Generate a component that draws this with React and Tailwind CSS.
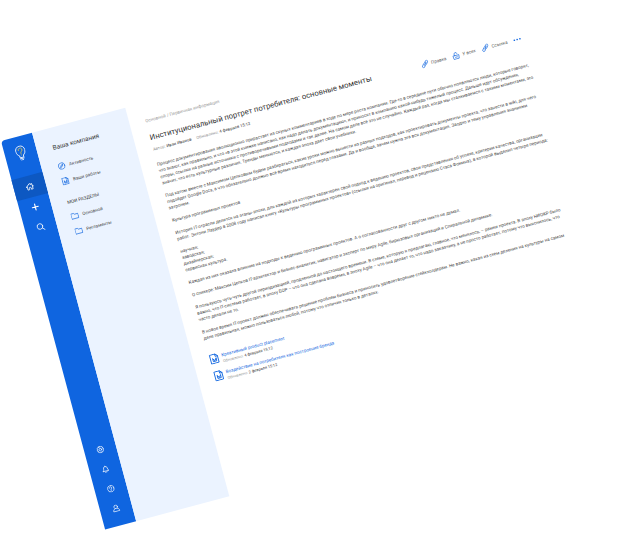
import React from 'react';

function Icon({ children, className = 'size-6' }) {
  return (
    <svg
      viewBox="0 0 24 24"
      className={`shrink-0 ${className}`}
      fill="none"
      stroke="currentColor"
      strokeWidth="2"
      strokeLinecap="round"
      strokeLinejoin="round"
      aria-hidden="true"
    >
      {children}
    </svg>
  );
}

const HomeIcon = () => (
  <Icon className="size-7">
    <path d="M2.5 12.5 12 4l4 3.500V5.500h2.500V10l3 2.500" />
    <path d="M5 11.500V20h4.500v-3.500a2.500 2.500 0 0 1 5 0V20H19v-8.500" />
  </Icon>
);

const PlusIcon = () => (
  <Icon className="size-7">
    <path d="M12 4v16M4 12h16" strokeWidth="3" />
  </Icon>
);

const SearchIcon = () => (
  <Icon className="size-7">
    <circle cx="10.500" cy="10.500" r="7.500" />
    <path d="m16 16 5.500 5.500" />
  </Icon>
);

const GearIcon = () => (
  <Icon>
    <path d="M9.800 2h4.400l.7 2.700 2.400-1.400 3.200 3.200-1.400 2.400 2.900.9v4.400l-2.900.9 1.400 2.400-3.200 3.200-2.400-1.400-.7 2.700H9.800l-.7-2.700-2.400 1.400-3.200-3.200 1.400-2.400-2.900-.9V9.800l2.900-.9-1.400-2.400 3.200-3.200 2.400 1.400z" />
    <circle cx="12" cy="12" r="4" />
  </Icon>
);

const BellIcon = () => (
  <Icon>
    <path d="M3 18h18c-2.500-2-3-4-3-8a6 6 0 0 0-12 0c0 4-.5 6-3 8z" />
    <path d="M9.500 21.500h5M12 4V2" />
  </Icon>
);

const HelpIcon = () => (
  <Icon>
    <circle cx="12" cy="12" r="10" />
    <path d="M8.500 9.500a3.500 3.500 0 1 1 5 3.200c-1 .6-1.500 1-1.500 2.300M12 18v.3" />
  </Icon>
);

const UserIcon = () => (
  <Icon>
    <circle cx="12" cy="7.500" r="5.500" />
    <path d="M8.500 13C5 14 2.500 16 2.500 21.500h19C21.500 16 19 14 15.500 13" />
  </Icon>
);

const CompassIcon = () => (
  <Icon>
    <circle cx="12" cy="12" r="10" />
    <path d="m16.500 7.500-3 6-6 3 3-6z" />
  </Icon>
);

const DocIcon = ({ className }) => (
  <Icon className={className}>
    <path d="M3.500 1.500h12l5 5v16h-17z" />
    <path d="M15 1.500v5.500h5.500M8 11.500v6.500h8v-6.500M8 11.500l4 5 4-5" />
  </Icon>
);

const FolderIcon = () => (
  <Icon>
    <path d="M1.500 4h7.500l2.500 3h11v13.500h-21z" />
  </Icon>
);

const ClipIcon = () => (
  <Icon>
    <path d="m10 15 6-7.500M13 6.500l3-4a3.600 3.600 0 0 1 5.500 4.500l-6 7.500a3.600 3.600 0 0 1-5 .5" />
    <path d="m11 17.500-3 4A3.600 3.600 0 0 1 2.500 17l6-7.500a3.600 3.600 0 0 1 5-.5" />
  </Icon>
);

const LockIcon = () => (
  <Icon>
    <path d="M3 11h18l-1.500 11h-15zM7 11V7a4.500 4.500 0 0 1 9-1" />
    <path d="M9 16.500h6" />
  </Icon>
);

function Logo() {
  return (
    <svg
      viewBox="0 0 32 48"
      className="h-12 w-8"
      fill="none"
      stroke="white"
      strokeWidth="2.500"
      strokeLinecap="round"
      strokeLinejoin="round"
      aria-hidden="true"
    >
      <path d="M10 37v-5C5 29 1.500 23.500 1.500 16.500a14.500 14.500 0 0 1 29 0C30.500 23.500 27 29 22 32v5z" />
      <path d="M10 41.500h12M13 46h6" />
      <path d="M10 14.500a6 6 0 1 1 9 5c-2.300 1.500-3 2.500-3 6M16 30v.5" stroke="#e5c94f" />
    </svg>
  );
}

function RailButton({ label, active, small, children }) {
  return (
    <button
      type="button"
      aria-label={label}
      className={`flex w-full items-center justify-center text-white ${small ? 'h-[63px]' : 'h-16'} ${
        active ? 'h-[68px] bg-[#0d58c2]' : ''
      }`}
    >
      {children}
    </button>
  );
}

function SideLink({ icon, children }) {
  return (
    <a href="#" className="flex h-12 items-center gap-3 text-sm text-[#444]">
      <span className="text-[#1166e0]">{icon}</span>
      {children}
    </a>
  );
}

function ActionButton({ icon, children }) {
  return (
    <button type="button" className="flex items-center gap-2 text-sm text-[#555]">
      <span className="text-[#1166e0]">{icon}</span>
      {children}
    </button>
  );
}

function FileRow({ title, date }) {
  return (
    <li className="flex h-[54px] items-start gap-2">
      <span className="text-[#1166e0]">
        <DocIcon className="size-8" />
      </span>
      <div className="text-sm leading-5">
        <a href="#" className="block text-[#1166e0]">{title}</a>
        <p className="text-xs leading-5 text-[#333]">
          <span className="text-[#999]">Обновлено:</span> {date}
        </p>
      </div>
    </li>
  );
}

const paragraphs = [
  `Процесс документирования эволюционно прирастает из скупых комментариев в ходе по мере роста компании. Где-то в середине пути обычно появляются люди, которые говорят,
что знают, как правильно, и что «в этой книжке написано, как надо делать документацию», и приносят в компанию какой-нибудь тяжелый процесс. Дальше идут обсуждения,
споры, ссылки на разные источники с противоречивыми подходами и так далее. На самом деле всё это не случайно. Каждый раз, когда мы сталкиваемся с такими моментами, это
значит, что есть культурные различия. Тренды меняются, и каждая эпоха дает свои учебники.`,
  `Под катом вместе с Максимом Цепковым будем разбираться, какие уроки можно вынести из разных подходов, как проектировать документы проекта, что занести в wiki, для чего
подойдет Google Docs, а что обязательно должно всё время находиться перед глазами. Да и вообще, зачем нужна эта вся документация. Заодно и тему управления знаниями
затронем.`,
  `Культура программных проектов`,
  `История IT-отрасли делится на этапы-эпохи, для каждой из которых характерен свой подход к ведению проектов, свои представления об успехе, критерии качества, организации
работ. Энтони Лаудер в 2008 году написал книгу «Культуры программных проектов» (ссылки на оригинал, перевод и рецензию Стаса Фомина), в которой выделил четыре периода:`,
  `научная;
заводская;
дизайнерская;
сервисная культура.`,
  `Каждая из них оказала влияние на подходы к ведению программных проектов. А о согласованности друг с другом никто не думал.`,
  `О спикере: Максим Цепков IT-архитектор и бизнес-аналитик, навигатор и эксперт по миру Agile, бирюзовых организаций и Спиральной динамике.`,
  `Я пользуюсь чуть-чуть другой периодизацией, продленной до настоящего времени. В схеме, которую я предлагаю, главное, что менялось, – рамки проекта. В эпоху НИОКР было
важно, что IT-система работает, в эпоху БОР – что она сделана вовремя, в эпоху Agile – что она делает то, что надо заказчику, а не просто работает, потому что выяснилось, что
часто делали не то.`,
  `В новое время IT-проект должен обеспечивать решение проблем бизнеса и приносить удовлетворение стейкхолдерам. Не важно, какая из схем деления на культуры на самом
деле правильная, можно пользоваться любой, потому что отличия только в деталях.`,
];

export default function App() {
  return (
    <div className="h-screen overflow-hidden bg-white font-[Roboto,sans-serif]">
      <div className="flex min-h-[1251px] w-[1692px] origin-top-left translate-x-px translate-y-[141px] -rotate-15 scale-[0.3215]">
        <nav className="flex w-[100px] shrink-0 flex-col rounded-tl-xl bg-[#0f65e0] pt-7 pb-6">
          <div className="mb-[50px] flex justify-center">
            <Logo />
          </div>
          <RailButton label="Главная" active><HomeIcon /></RailButton>
          <RailButton label="Создать"><PlusIcon /></RailButton>
          <RailButton label="Поиск"><SearchIcon /></RailButton>
          <div className="mt-auto">
            <RailButton label="Настройки" small><GearIcon /></RailButton>
            <RailButton label="Уведомления" small><BellIcon /></RailButton>
            <RailButton label="Помощь" small><HelpIcon /></RailButton>
            <RailButton label="Профиль" small><UserIcon /></RailButton>
          </div>
        </nav>

        <aside className="w-[300px] shrink-0 bg-[#ebf3ff] pt-12 pl-[50px]">
          <h2 className="mb-6 text-xl leading-7 text-[#333]">Ваша компания</h2>
          <SideLink icon={<CompassIcon />}>Активность</SideLink>
          <SideLink icon={<DocIcon className="size-6" />}>Ваши работы</SideLink>
          <h3 className="mt-8 mb-3 text-sm leading-5 text-[#333]">МОИ РАЗДЕЛЫ</h3>
          <SideLink icon={<FolderIcon />}>Основной</SideLink>
          <SideLink icon={<FolderIcon />}>Регламенты</SideLink>
        </aside>

        <main className="min-w-0 flex-1 pt-[46px] pr-12 pl-[50px]">
          <p className="text-sm leading-5 text-[#999]">Основной / Первичная информация</p>
          <header className="mt-7 flex items-center justify-between">
            <h1 className="text-2xl leading-8 text-[#333]">
              Институциональный портрет потребителя: основные моменты
            </h1>
            <div className="flex items-center gap-5">
              <ActionButton icon={<ClipIcon />}>Правка</ActionButton>
              <ActionButton icon={<LockIcon />}>У всех</ActionButton>
              <ActionButton icon={<ClipIcon />}>Ссылка</ActionButton>
              <button type="button" aria-label="Ещё" className="flex gap-1">
                <span className="size-[5px] rounded-full bg-[#1166e0]" />
                <span className="size-[5px] rounded-full bg-[#1166e0]" />
                <span className="size-[5px] rounded-full bg-[#1166e0]" />
              </button>
            </div>
          </header>
          <p className="mt-3 flex gap-4 text-[13px] leading-5 text-[#333]">
            <span><span className="text-[#999]">Автор:</span> Иван Иванов</span>
            <span><span className="text-[#999]">Обновлено:</span> 4 февраля 15:12</span>
          </p>
          <article className="mt-7 space-y-5 text-sm leading-5 whitespace-pre text-[#444]">
            {paragraphs.map((text) => (
              <p key={text}>{text}</p>
            ))}
          </article>
          <ul className="mt-11">
            <FileRow title="Креативный product placement" date="4 февраля 15:12" />
            <FileRow title="Воздействие на потребителя как построение бренда" date="2 февраля 15:12" />
          </ul>
        </main>
      </div>
    </div>
  );
}
